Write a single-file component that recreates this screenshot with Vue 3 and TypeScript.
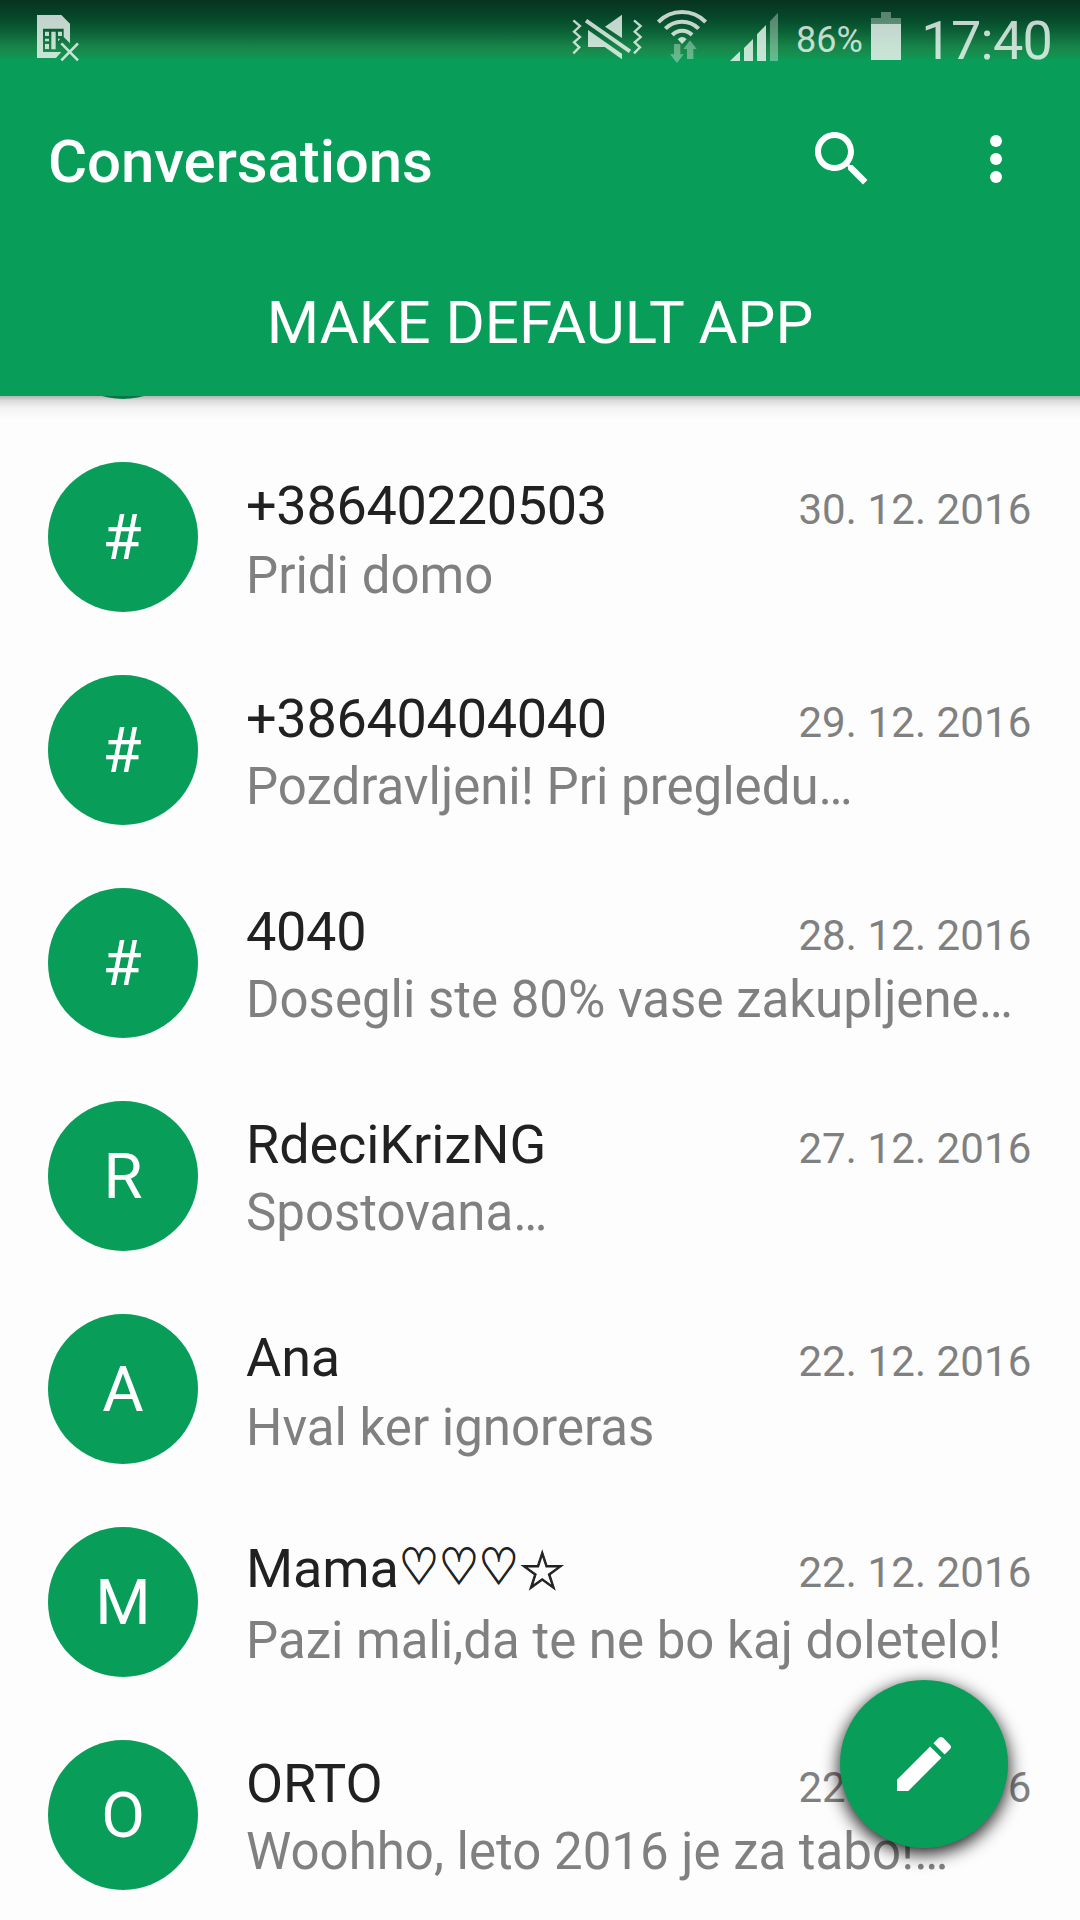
<script setup lang="ts">
interface Conversation {
  initial: string
  name: string
  symbols?: { hearts: string; star: string }
  date: string
  snippet: string
  numeric?: boolean
  multiline?: boolean
}

const conversations: Conversation[] = [
  { initial: '#', name: '+38640220503', date: '30. 12. 2016', snippet: 'Pridi domo', numeric: true },
  {
    initial: '#',
    name: '+38640404040',
    date: '29. 12. 2016',
    snippet: 'Pozdravljeni! Pri pregledu…',
    numeric: true,
    multiline: true,
  },
  {
    initial: '#',
    name: '4040',
    date: '28. 12. 2016',
    snippet: 'Dosegli ste 80% vase zakupljene…',
    numeric: true,
    multiline: true,
  },
  { initial: 'R', name: 'RdeciKrizNG', date: '27. 12. 2016', snippet: 'Spostovana…', multiline: true },
  { initial: 'A', name: 'Ana', date: '22. 12. 2016', snippet: 'Hval ker ignoreras' },
  {
    initial: 'M',
    name: 'Mama',
    symbols: { hearts: '♡♡♡', star: '☆' },
    date: '22. 12. 2016',
    snippet: 'Pazi mali,da te ne bo kaj doletelo!',
  },
  { initial: 'O', name: 'ORTO', date: '22. 12. 2016', snippet: 'Woohho, leto 2016 je za tabo!…', multiline: true },
]
</script>

<template>
  <div class="screen">
    <header class="header">
      <div class="status">
        <svg class="sim" viewBox="108 0 132 225" width="44" height="75">
          <path
            fill="currentColor"
            fill-rule="evenodd"
            d="M111 45H184L210 71V130L191 111V86H129V156H184L168 174H111Z"
          />
          <path
            fill="currentColor"
            d="M135 95h12v13h-12zM154 95h13v53h-13zM174 95h12v13h-12zM135 116h12v8h-12zM135 132h12v15h-12zM174 116h7l-7 8z"
          />
          <path d="M184 130L234 181M234 130L184 181" stroke="currentColor" stroke-width="8" fill="none" />
        </svg>

        <svg class="vibrate" viewBox="60 0 220 225" width="73.33" height="75">
          <g fill="none" stroke="currentColor" stroke-width="7">
            <path d="M70 61L90 78L72 95L90 111L72 127L88 142L70 160" />
            <path d="M252 61L272 78L254 95L272 111L254 127L270 142L252 160" />
          </g>
          <path d="M108 62L240 154" stroke="currentColor" stroke-width="12" />
          <path fill="currentColor" d="M165 80L216 44V114ZM114 90L216 161V178L164 141H114Z" />
        </svg>

        <svg class="wifi" viewBox="318 0 156 225" width="52" height="75">
          <g fill="none" stroke="currentColor" stroke-width="12">
            <path d="M325 66A99 99 0 0 1 467 66" />
            <path d="M346 86A70 70 0 0 1 446 86" />
            <path d="M367 105A41 41 0 0 1 426 105" />
          </g>
          <path fill="currentColor" d="M383 118Q396 104 410 118L396 132Z" />
          <path
            fill="currentColor"
            opacity=".45"
            d="M372 132H391V163H401L381 189L360 163H372ZM420 121L440 147H430V177H411V147H400Z"
          />
        </svg>

        <svg class="signal" viewBox="540 0 144 225" width="48" height="75">
          <path
            fill="currentColor"
            d="M540 183L570 154V183ZM582 183V144L609 117V183ZM621 183V103L648 75V183Z"
          />
          <path fill="currentColor" opacity=".45" d="M660 183V64L684 38V183Z" />
        </svg>

        <span class="percent">86%</span>

        <svg class="battery" viewBox="183 0 90 225" width="30" height="75">
          <path fill="currentColor" opacity=".45" d="M213 36H243V54H273V72H183V54H213Z" />
          <path fill="currentColor" d="M183 72H273V180H183Z" />
        </svg>

        <span class="clock">17:40</span>
      </div>

      <div class="toolbar">
        <h1 class="title">Conversations</h1>
        <svg class="search" viewBox="0 0 24 24" width="72" height="72">
          <path
            fill="#fff"
            d="M15.5 14h-.79l-.28-.27C15.41 12.59 16 11.11 16 9.5 16 5.91 13.09 3 9.5 3S3 5.91 3 9.5 5.91 16 9.5 16c1.61 0 3.09-.59 4.23-1.57l.27.28v.79l5 4.99L20.49 19l-4.99-5zm-6 0C7.01 14 5 11.99 5 9.5S7.01 5 9.5 5 14 7.01 14 9.5 11.99 14 9.5 14z"
          />
        </svg>
        <svg class="more" viewBox="0 0 24 24" width="72" height="72">
          <g fill="#fff">
            <circle cx="12" cy="6" r="2" />
            <circle cx="12" cy="12" r="2" />
            <circle cx="12" cy="18" r="2" />
          </g>
        </svg>
      </div>

      <button class="default-app">MAKE DEFAULT APP</button>
    </header>

    <main class="viewport">
      <div class="list">
        <div class="row"><div class="avatar"></div></div>
        <div
          v-for="c in conversations"
          :key="c.name"
          class="row"
          :class="{ numeric: c.numeric, multiline: c.multiline, symbolic: c.symbols }"
        >
          <div class="avatar">{{ c.initial }}</div>
          <div class="body">
            <div class="top">
              <span class="name"
                >{{ c.name
                }}<template v-if="c.symbols"
                  ><span class="hearts">{{ c.symbols.hearts }}</span
                  ><span class="star">{{ c.symbols.star }}</span></template
                ></span
              >
              <span class="date">{{ c.date }}</span>
            </div>
            <div class="snippet">{{ c.snippet }}</div>
          </div>
        </div>
      </div>
    </main>

    <button class="fab" aria-label="New conversation">
      <svg viewBox="0 0 24 24" width="72" height="72">
        <path
          fill="#fff"
          d="M3 17.25V21h3.75L17.81 9.94l-3.75-3.75L3 17.25zM20.71 7.04c.39-.39.39-1.02 0-1.41l-2.34-2.34c-.39-.39-1.02-.39-1.41 0l-1.83 1.83 3.75 3.75 1.83-1.83z"
        />
      </svg>
    </button>
  </div>
</template>

<style>
body {
  margin: 0;
}
</style>

<style scoped>
.screen {
  position: relative;
  display: flex;
  flex-direction: column;
  width: 1080px;
  height: 1920px;
  overflow: hidden;
  background: #fdfdfd;
  font-family: Roboto, 'Liberation Sans', sans-serif;
}

button {
  border: 0;
  padding: 0;
  font: inherit;
}

svg {
  display: block;
  flex: none;
}

.header {
  position: relative;
  z-index: 1;
  flex: none;
  height: 396px;
  background: #089e59;
  color: #fff;
}

.header::after {
  content: '';
  position: absolute;
  top: 100%;
  left: 0;
  right: 0;
  height: 24px;
  background: linear-gradient(rgba(0, 0, 0, 0.29), rgba(0, 0, 0, 0.13) 20%, rgba(0, 0, 0, 0.04) 50%, transparent);
}

.status {
  display: flex;
  height: 75px;
  color: rgba(255, 255, 255, 0.76);
  background: linear-gradient(#07331f, #06482a 18px, #0b6237 32px, #168348 46px, #178d4e 53px, #089e59 61px);
}

.sim {
  margin-left: 36px;
}

.vibrate {
  margin-left: 490px;
}

.wifi {
  margin-left: 12.67px;
}

.signal {
  margin-left: 22px;
}

.percent {
  width: 75px;
  margin-left: 18px;
  font-size: 36px;
  line-height: 80px;
}

.clock {
  margin-left: 20.3px;
  font-size: 54px;
  line-height: 81px;
  letter-spacing: -0.7px;
}

.toolbar {
  display: flex;
  align-items: center;
  height: 168px;
  padding: 0 48px;
}

.title {
  flex: 1;
  margin: 5px 0 0;
  font-size: 60px;
  font-weight: 500;
  line-height: 70px;
  letter-spacing: -0.1px;
}

.more {
  margin-left: 82px;
}

.default-app {
  display: block;
  width: 100%;
  height: 153px;
  padding-top: 6px;
  background: none;
  color: #fff;
  font-size: 60px;
  line-height: 70px;
}

.viewport {
  flex: 1;
  min-height: 0;
  overflow: hidden;
}

.list {
  margin-top: -178px;
}

.row {
  display: flex;
  height: 213px;
  padding: 31px 48px 0;
  box-sizing: border-box;
}

.avatar {
  flex: none;
  width: 150px;
  height: 150px;
  border-radius: 50%;
  background: #089e59;
  color: #fff;
  font-size: 63.5px;
  line-height: 151px;
  text-align: center;
}

.numeric .avatar {
  text-indent: -2px;
}

.body {
  flex: 1;
  min-width: 0;
  margin-left: 48px;
  padding-top: 12px;
}

.symbolic .body {
  padding-top: 10px;
}

.top {
  display: flex;
  align-items: baseline;
  justify-content: space-between;
  height: 64px;
  white-space: nowrap;
}

.name {
  font-size: 54px;
  line-height: 63px;
  letter-spacing: -0.1px;
  color: #212121;
}

.numeric .name {
  letter-spacing: -0.3px;
}

.hearts,
.star {
  display: inline-block;
  font-family: 'DejaVu Sans', sans-serif;
  line-height: 1;
  height: 1em;
  letter-spacing: 0;
  -webkit-text-stroke: 1.4px #212121;
}

.hearts {
  margin-right: -14.8px;
  font-size: 50px;
  transform: translateY(-3px) scaleX(0.89);
  transform-origin: left;
}

.star {
  font-size: 53px;
  -webkit-text-stroke-width: 1px;
  transform: translateY(2px);
}

.date {
  margin-right: 0.6px;
  font-size: 42px;
  line-height: 49px;
  letter-spacing: 0.1px;
  color: #808080;
}

.snippet {
  margin-top: 8px;
  font-size: 51px;
  line-height: 60px;
  color: #808080;
  white-space: nowrap;
}

.multiline .snippet {
  margin-top: 6px;
}

.symbolic .snippet {
  margin-top: 10px;
}

.fab {
  position: absolute;
  z-index: 2;
  right: 72px;
  bottom: 72px;
  display: flex;
  align-items: center;
  justify-content: center;
  width: 168px;
  height: 168px;
  border-radius: 50%;
  background: #089e59;
  box-shadow: 0 5px 17px 1px rgba(0, 0, 0, 0.88);
}
</style>
